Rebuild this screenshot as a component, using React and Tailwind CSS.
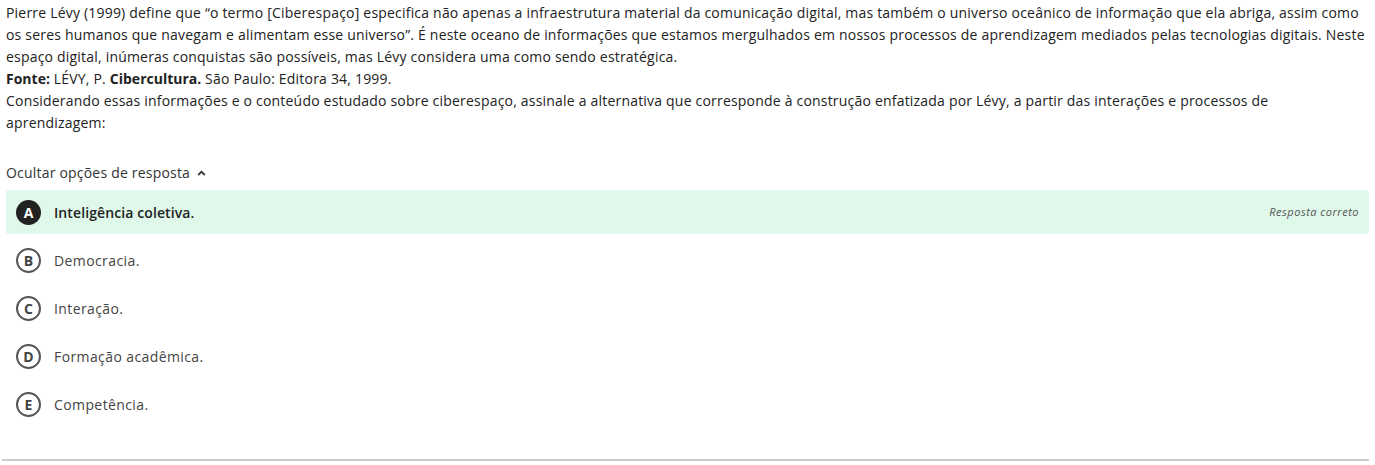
import React from "react";

const options = [
  { letter: "A", text: "Inteligência coletiva.", correct: true },
  { letter: "B", text: "Democracia." },
  { letter: "C", text: "Interação." },
  { letter: "D", text: "Formação acadêmica." },
  { letter: "E", text: "Competência." },
];

const OptionRow = ({ letter, text, correct }) => {
  return (
    <div
      className={`flex items-center h-[44px] pl-[10px] pr-[10px] rounded-[3px] ${
        correct ? "bg-[#dff8ea]" : ""
      }`}
    >
      <div
        className={`w-[25px] h-[25px] rounded-full flex items-center justify-center text-[14px] font-bold shrink-0 ${
          correct
            ? "bg-[#222222] text-white"
            : "border-2 border-[#555555] text-[#444444]"
        }`}
      >
        {letter}
      </div>
      <p
        className={`ml-[13px] text-[14px] ${
          correct
            ? "text-[#222222] font-semibold tracking-[0.1px]"
            : "text-[#444444] tracking-[0.4px]"
        }`}
      >
        {text}
      </p>
      {correct && (
        <p className="ml-auto italic text-[11px] tracking-[0.5px] text-[#555555]">
          Resposta correto
        </p>
      )}
    </div>
  );
};

export default function App() {
  return (
    <div
      className="w-[1375px] h-[465px] bg-white px-[6px] pt-[2px] text-[#222222]"
      style={{ fontFamily: '"Open Sans", "Liberation Sans", sans-serif' }}
    >
      <div className="text-[14px] leading-[22px] tracking-[0.2px] whitespace-nowrap">
        <p>
          Pierre Lévy (1999) define que “o termo [Ciberespaço] especifica não
          apenas a infraestrutura material da comunicação digital, mas também o
          universo oceânico de informação que ela abriga, assim como
          <br />
          os seres humanos que navegam e alimentam esse universo”. É neste
          oceano de informações que estamos mergulhados em nossos processos de
          aprendizagem mediados pelas tecnologias digitais. Neste
          <br />
          espaço digital, inúmeras conquistas são possíveis, mas Lévy considera
          uma como sendo estratégica.
        </p>
        <p>
          <span className="font-bold tracking-normal">Fonte:</span> LÉVY, P.{" "}
          <span className="font-bold tracking-normal">Cibercultura.</span> São
          Paulo: Editora 34, 1999.
        </p>
        <p>
          Considerando essas informações e o conteúdo estudado sobre
          ciberespaço, assinale a alternativa que corresponde à construção
          enfatizada por Lévy, a partir das interações e processos de
          <br />
          aprendizagem:
        </p>
      </div>

      <div className="flex items-center mt-[27px] h-[22px] text-[14px] tracking-[0.2px] text-[#333333]">
        <span>Ocultar opções de resposta</span>
        <svg
          className="ml-[7px] mt-[1px]"
          width="9"
          height="6"
          viewBox="0 0 9 6"
          fill="none"
        >
          <path
            d="M1.2 5 L4.5 1.7 L7.8 5"
            stroke="#333333"
            strokeWidth="1.8"
          />
        </svg>
      </div>

      <div className="mt-[7px] flex flex-col gap-[4px]">
        {options.map((o) => (
          <OptionRow key={o.letter} {...o} />
        ))}
      </div>

      <div className="mt-[33px] ml-[-4px] border-t-2 border-[#cccccc]" />
    </div>
  );
}
